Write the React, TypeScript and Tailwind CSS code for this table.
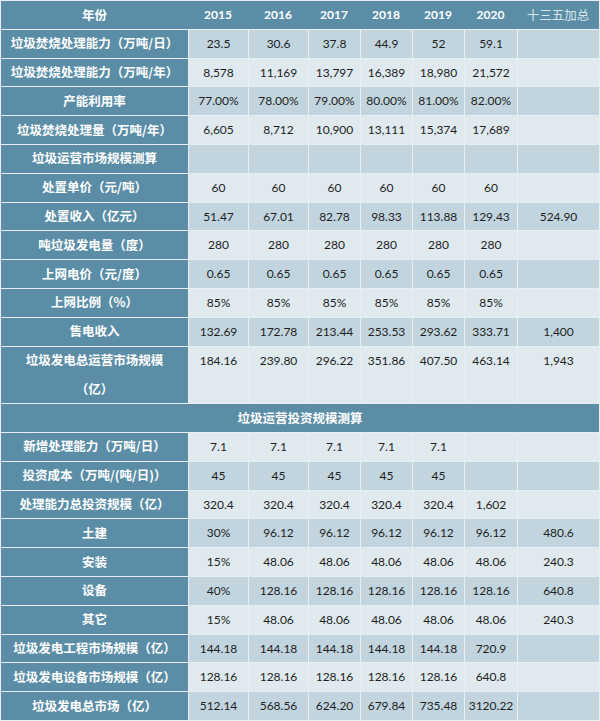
const years = ["2015", "2016", "2017", "2018", "2019", "2020"];

type Row = {
  label: React.ReactNode;
  cells: string[];
  shade: "m" | "l";
  tall?: boolean;
};

const opsRows: Row[] = [
  { label: "垃圾焚烧处理能力（万吨/日）", cells: ["23.5", "30.6", "37.8", "44.9", "52", "59.1", ""], shade: "m" },
  { label: "垃圾焚烧处理能力（万吨/年）", cells: ["8,578", "11,169", "13,797", "16,389", "18,980", "21,572", ""], shade: "l" },
  { label: "产能利用率", cells: ["77.00%", "78.00%", "79.00%", "80.00%", "81.00%", "82.00%", ""], shade: "m" },
  { label: "垃圾焚烧处理量（万吨/年）", cells: ["6,605", "8,712", "10,900", "13,111", "15,374", "17,689", ""], shade: "l" },
  { label: "垃圾运营市场规模测算", cells: ["", "", "", "", "", "", ""], shade: "m" },
  { label: "处置单价（元/吨）", cells: ["60", "60", "60", "60", "60", "60", ""], shade: "l" },
  { label: "处置收入（亿元）", cells: ["51.47", "67.01", "82.78", "98.33", "113.88", "129.43", "524.90"], shade: "m" },
  { label: "吨垃圾发电量（度）", cells: ["280", "280", "280", "280", "280", "280", ""], shade: "l" },
  { label: "上网电价（元/度）", cells: ["0.65", "0.65", "0.65", "0.65", "0.65", "0.65", ""], shade: "m" },
  { label: "上网比例（%）", cells: ["85%", "85%", "85%", "85%", "85%", "85%", ""], shade: "l" },
  { label: "售电收入", cells: ["132.69", "172.78", "213.44", "253.53", "293.62", "333.71", "1,400"], shade: "m" },
  {
    label: (
      <>
        垃圾发电总运营市场规模
        <br />
        （亿）
      </>
    ),
    cells: ["184.16", "239.80", "296.22", "351.86", "407.50", "463.14", "1,943"],
    shade: "l",
    tall: true,
  },
];

const investRows: Row[] = [
  { label: "新增处理能力（万吨/日）", cells: ["7.1", "7.1", "7.1", "7.1", "7.1", "", ""], shade: "l" },
  { label: "投资成本（万吨/(吨/日)）", cells: ["45", "45", "45", "45", "45", "", ""], shade: "m" },
  { label: "处理能力总投资规模（亿）", cells: ["320.4", "320.4", "320.4", "320.4", "320.4", "1,602", ""], shade: "l" },
  { label: "土建", cells: ["30%", "96.12", "96.12", "96.12", "96.12", "96.12", "480.6"], shade: "m" },
  { label: "安装", cells: ["15%", "48.06", "48.06", "48.06", "48.06", "48.06", "240.3"], shade: "l" },
  { label: "设备", cells: ["40%", "128.16", "128.16", "128.16", "128.16", "128.16", "640.8"], shade: "m" },
  { label: "其它", cells: ["15%", "48.06", "48.06", "48.06", "48.06", "48.06", "240.3"], shade: "l" },
  { label: "垃圾发电工程市场规模（亿）", cells: ["144.18", "144.18", "144.18", "144.18", "144.18", "720.9", ""], shade: "m" },
  { label: "垃圾发电设备市场规模（亿）", cells: ["128.16", "128.16", "128.16", "128.16", "128.16", "640.8", ""], shade: "l" },
  { label: "垃圾发电总市场（亿）", cells: ["512.14", "568.56", "624.20", "679.84", "735.48", "3120.22", ""], shade: "m" },
];

function TableRow({ row }: { row: Row }) {
  const bg = row.shade === "m" ? "bg-[#c2d5de]" : "bg-[#dfe9ee]";
  const span = row.tall ? "row-span-2" : "";
  return (
    <>
      <div
        className={`${span} bg-[#5b8ea6] flex items-center justify-center text-center text-white font-bold text-[12.5px] leading-[28.8px] font-['Noto_Sans_CJK_SC',sans-serif] whitespace-nowrap`}
      >
        <div>{row.label}</div>
      </div>
      {row.cells.map((c, i) => (
        <div
          key={i}
          className={`${span} ${bg} text-center text-[#1e1e1e] text-[12px] ${row.tall ? "leading-[28.8px]" : "leading-[27.8px]"} font-['Lato',sans-serif]`}
        >
          {c}
        </div>
      ))}
    </>
  );
}

export default function App() {
  return (
    <div className="w-[600px] h-[721px] bg-[#e8eff2] p-px grid grid-cols-[187px_59px_59px_51px_51px_51px_52px_81px] auto-rows-[27.8px] gap-px overflow-hidden">
      {/* header */}
      <div className="bg-[#5b8ea6] flex items-center justify-center text-white font-bold text-[12.5px] font-['Noto_Sans_CJK_SC',sans-serif]">
        年份
      </div>
      {years.map((y) => (
        <div
          key={y}
          className="bg-[#5b8ea6] -ml-px flex items-center justify-center text-white font-bold text-[12px] font-['Lato',sans-serif]"
        >
          {y}
        </div>
      ))}
      <div className="bg-[#5b8ea6] -ml-px flex items-center justify-center text-[#dae5ea] text-[12.5px] font-['Noto_Sans_CJK_SC',sans-serif]">
        十三五加总
      </div>

      {opsRows.map((r, i) => (
        <TableRow key={i} row={r} />
      ))}

      <div className="col-span-8 bg-[#5b8ea6] flex items-center justify-center text-white font-bold text-[12.5px] font-['Noto_Sans_CJK_SC',sans-serif]">
        垃圾运营投资规模测算
      </div>

      {investRows.map((r, i) => (
        <TableRow key={i} row={r} />
      ))}
    </div>
  );
}
